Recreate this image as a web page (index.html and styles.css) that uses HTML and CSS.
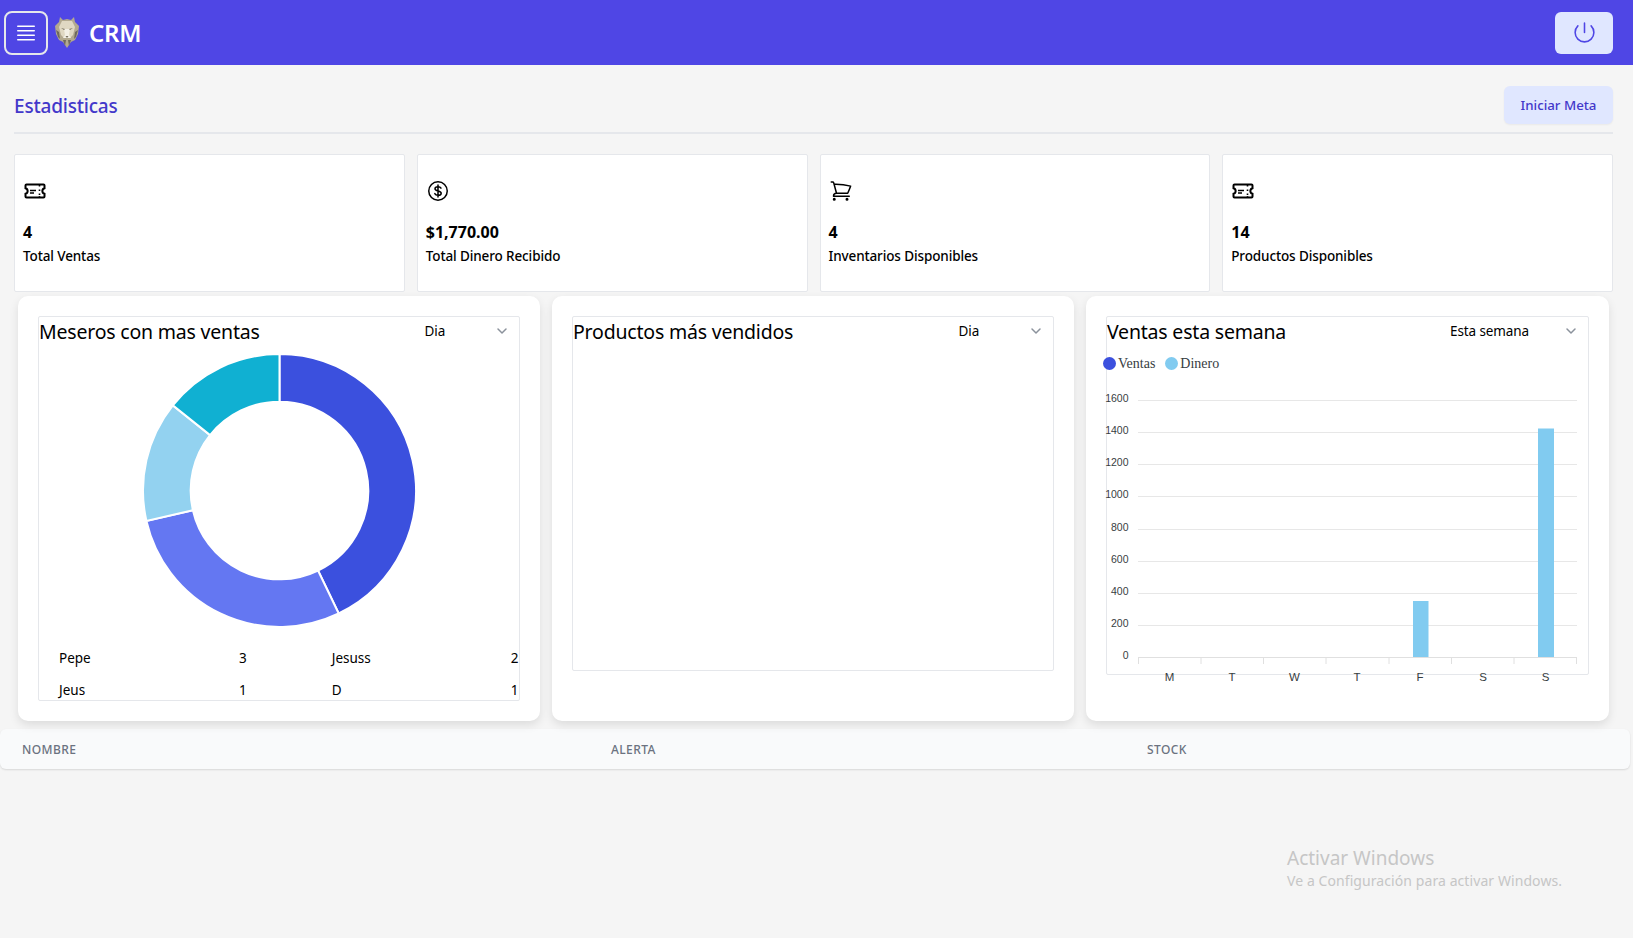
FILE: index.html
```html
<!DOCTYPE html>
<html lang="es">
<head>
<meta charset="utf-8">
<title>CRM</title>
<link rel="stylesheet" href="styles.css">
</head>
<body>
<svg class="defs" width="0" height="0" aria-hidden="true">
  <symbol id="ticket" viewBox="0 0 24 24">
    <path d="M3.500 5.500h17a1 1 0 0 1 1 1v2.700a2.900 2.900 0 0 0 0 5.600v2.700a1 1 0 0 1-1 1h-17a1 1 0 0 1-1-1v-2.700a2.900 2.900 0 0 0 0-5.600V6.500a1 1 0 0 1 1-1z" fill="none" stroke="currentColor" stroke-width="2"/>
    <path d="M7 11.500h6M7 14h4M16.500 6v1.500M16.500 10.500v1.500M16.500 14.500V16M16.500 17.200v1" fill="none" stroke="currentColor" stroke-width="1.600"/>
  </symbol>
  <symbol id="chev" viewBox="0 0 20 20">
    <path d="M6 8l4 4 4-4" fill="none" stroke="#8b929c" stroke-width="1.500" stroke-linecap="round" stroke-linejoin="round"/>
  </symbol>
</svg>

<header class="topbar">
  <div class="brand">
    <button class="menu-btn" type="button" aria-label="Menu">
      <svg class="menu-icon" viewBox="0 0 24 24"><path d="M3.750 5.250h16.500M3.750 9.750h16.500M3.750 14.250h16.500M3.750 18.750h16.500" fill="none" stroke="currentColor" stroke-width="1.500" stroke-linecap="round"/></svg>
    </button>
    <svg class="lion" viewBox="0 0 26 32" aria-hidden="true">
      <path d="M6 1l3 3 4-1 4 1 3-3 1 5 4 4-1 8-3 6-4 2-4 6-4-6-4-2-3-6-1-8 4-4z" fill="#b3a98f"/>
      <path d="M8 5h10l3 6-2 8-3 3h-6l-3-3-2-8z" fill="#e0d8c3"/>
      <path d="M2 14l3 2 1 7-2-2zM24 14l-3 2-1 7 2-2zM9 24l2 6 1-6zM17 24l-2 6-1-6z" fill="#6e695e"/>
      <path d="M10 13h6l-1 6 2 3h-8l2-3z" fill="#f3efe5"/>
      <path d="M7 12l4 1-1 1zM19 12l-4 1 1 1z" fill="#77705f"/>
      <path d="M11.500 20h3l-1.500 2z" fill="#77705f"/>
    </svg>
    <span class="brand-name">CRM</span>
  </div>
  <button class="power-btn" type="button" aria-label="Salir">
    <svg class="power-icon" viewBox="0 0 24 24"><path d="M5.636 5.636a9 9 0 1 0 12.728 0M12 3v9" fill="none" stroke="currentColor" stroke-width="1.500" stroke-linecap="round" stroke-linejoin="round"/></svg>
  </button>
</header>

<main class="page">
  <div class="title-row">
    <h1 class="page-title">Estadisticas</h1>
    <button class="goal-btn" type="button">Iniciar Meta</button>
  </div>

  <section class="stats">
    <article class="stat">
      <svg class="stat-icon"><use href="#ticket"/></svg>
      <div class="stat-value">4</div>
      <div class="stat-label">Total Ventas</div>
    </article>
    <article class="stat">
      <svg class="stat-icon" viewBox="0 0 24 24"><path d="M12 2.750a9.250 9.250 0 1 0 0 18.500 9.250 9.250 0 0 0 0-18.500zM12 6v12M15 9.200c-.5-1-1.600-1.500-3-1.500-1.700 0-3 .8-3 2.100 0 3 6.200 1.500 6.200 4.400 0 1.300-1.400 2.100-3.200 2.100-1.500 0-2.700-.6-3.200-1.700" fill="none" stroke="currentColor" stroke-width="1.500" stroke-linecap="round"/></svg>
      <div class="stat-value">$1,770.00</div>
      <div class="stat-label">Total Dinero Recibido</div>
    </article>
    <article class="stat">
      <svg class="stat-icon" viewBox="0 0 24 24"><path d="M2.250 3h1.386c.51 0 .955.343 1.087.835l.383 1.437M7.500 14.250a3 3 0 0 0-3 3h15.750m-12.750-3h11.218c1.121-2.300 2.100-4.684 2.924-7.138a60.114 60.114 0 0 0-16.536-1.840M7.500 14.250L5.106 5.272M6 20.250a.75.750 0 1 1-1.500 0 .75.750 0 0 1 1.500 0zm12.750 0a.75.750 0 1 1-1.500 0 .75.750 0 0 1 1.500 0z" fill="none" stroke="currentColor" stroke-width="1.500" stroke-linecap="round" stroke-linejoin="round"/></svg>
      <div class="stat-value">4</div>
      <div class="stat-label">Inventarios Disponibles</div>
    </article>
    <article class="stat">
      <svg class="stat-icon"><use href="#ticket"/></svg>
      <div class="stat-value">14</div>
      <div class="stat-label">Productos Disponibles</div>
    </article>
  </section>

  <section class="charts">
    <article class="panel">
      <div class="box box-donut">
        <div class="box-head">
          <h2 class="box-title">Meseros con mas ventas</h2>
          <div class="picker"><span>Dia</span><svg class="chev"><use href="#chev"/></svg></div>
        </div>
        <div class="donut-wrap">
          <svg class="donut" viewBox="-138 -138 276 276" aria-hidden="true">
            <g stroke="#fff" stroke-width="2">
              <path fill="#3b50de" d="M0-136A136 136 0 0 1 59 122.500L38.400 79.700A88.500 88.500 0 0 0 0-88.500z"/>
              <path fill="#6477f2" d="M59 122.500A136 136 0 0 1-132.600 30.300L-86.300 19.700A88.500 88.500 0 0 0 38.400 79.700z"/>
              <path fill="#93d2f0" d="M-132.600 30.300A136 136 0 0 1-106.300-84.800L-69.200-55.200A88.500 88.500 0 0 0-86.300 19.700z"/>
              <path fill="#10b0d2" d="M-106.300-84.800A136 136 0 0 1 0-136L0-88.500A88.500 88.500 0 0 0-69.200-55.200z"/>
            </g>
          </svg>
        </div>
        <div class="rank">
          <div class="rank-item"><span>Pepe</span><span>3</span></div>
          <div class="rank-item"><span>Jesuss</span><span>2</span></div>
          <div class="rank-item"><span>Jeus</span><span>1</span></div>
          <div class="rank-item"><span>D</span><span>1</span></div>
        </div>
      </div>
    </article>

    <article class="panel">
      <div class="box box-empty">
        <div class="box-head">
          <h2 class="box-title">Productos más vendidos</h2>
          <div class="picker"><span>Dia</span><svg class="chev"><use href="#chev"/></svg></div>
        </div>
      </div>
    </article>

    <article class="panel">
      <div class="box box-bars">
        <div class="box-head">
          <h2 class="box-title">Ventas esta semana</h2>
          <div class="picker picker-wide"><span>Esta semana</span><svg class="chev"><use href="#chev"/></svg></div>
        </div>
        <div class="legend">
          <span class="legend-item"><i class="dot dot-a"></i>Ventas</span>
          <span class="legend-item"><i class="dot dot-b"></i>Dinero</span>
        </div>
        <svg class="bars" viewBox="0 0 482 320" aria-hidden="true">
          <g class="grid">
            <path d="M32 24.500h439M32 56.500h439M32 88.500h439M32 120.500h439M32 153.500h439M32 185.500h439M32 217.500h439M32 249.500h439"/>
          </g>
          <g class="axis-x">
            <path d="M32 281.500h439M32.500 281v7M95 281v7M157.500 281v7M220 281v7M283 281v7M345.500 281v7M408 281v7M470.500 281v7"/>
          </g>
          <rect class="bar" x="307" y="225" width="15.500" height="56"/>
          <rect class="bar" x="432" y="52.500" width="16" height="228.500"/>
          <g class="y-labels">
            <text x="22.500" y="26">1600</text><text x="22.500" y="58">1400</text><text x="22.500" y="90">1200</text><text x="22.500" y="122">1000</text>
            <text x="22.500" y="155">800</text><text x="22.500" y="187">600</text><text x="22.500" y="219">400</text><text x="22.500" y="251">200</text><text x="22.500" y="283">0</text>
          </g>
          <g class="x-labels">
            <text x="63.500" y="305">M</text><text x="126" y="305">T</text><text x="188.500" y="305">W</text><text x="251" y="305">T</text>
            <text x="314" y="305">F</text><text x="377" y="305">S</text><text x="439.500" y="305">S</text>
          </g>
        </svg>
      </div>
    </article>
  </section>

  <section class="table-head">
    <span class="col col-name">Nombre</span>
    <span class="col col-alert">Alerta</span>
    <span class="col">Stock</span>
  </section>
</main>

<aside class="watermark">
  <div class="wm-title">Activar Windows</div>
  <div class="wm-sub">Ve a Configuración para activar Windows.</div>
</aside>
</body>
</html>
```
FILE: styles.css
```css
* { box-sizing: border-box; }
html, body { margin: 0; padding: 0; }
body {
  height: 938px;
  overflow: hidden;
  background: #f5f5f5;
  color: #000;
  font-family: "Noto Sans", "Open Sans", sans-serif;
  font-size: 14px;
}
button { font-family: inherit; cursor: pointer; }
h1, h2 { margin: 0; font-weight: 400; }
.defs { position: absolute; }

.topbar {
  height: 65px;
  background: #4f46e5;
  display: flex;
  align-items: center;
  justify-content: space-between;
  padding: 0 20px 0 4px;
}
.brand { display: flex; align-items: center; }
.menu-btn {
  width: 44px;
  height: 44px;
  padding: 0;
  display: flex;
  align-items: center;
  justify-content: center;
  background: transparent;
  border: 2px solid #e5e7eb;
  border-radius: 8px;
  color: #fff;
}
.menu-icon { width: 24px; height: 24px; }
.lion { width: 26px; height: 32px; margin-left: 6px; margin-bottom: 1px; }
.brand-name {
  margin-left: 9px;
  color: #fff;
  font-size: 24px;
  font-weight: 600;
  letter-spacing: -0.3px;
}
.power-btn {
  width: 58px;
  height: 42px;
  padding: 0;
  display: flex;
  align-items: center;
  justify-content: center;
  background: #e0e7ff;
  border: 0;
  border-radius: 6px;
  color: #4f46e5;
}
.power-icon { width: 25px; height: 25px; }

.page { padding: 0; }
.title-row {
  margin: 21px 20px 0 14px;
  height: 48px;
  padding-bottom: 8px;
  border-bottom: 2px solid #e5e7eb;
  display: flex;
  align-items: center;
  justify-content: space-between;
}
.page-title {
  padding-top: 2px;
  font-size: 19px;
  font-weight: 500;
  color: #4338ca;
  letter-spacing: -0.2px;
}
.goal-btn {
  width: 109px;
  height: 38px;
  padding: 0;
  background: #e0e7ff;
  border: 0;
  border-radius: 6px;
  color: #4338ca;
  font-size: 13.300px;
  font-weight: 500;
  box-shadow: 0 1px 2px rgba(0, 0, 0, .05);
}

.stats {
  margin: 20px 20px 0 14px;
  display: grid;
  grid-template-columns: repeat(4, 1fr);
  column-gap: 12px;
}
.stat {
  height: 138px;
  padding: 24px 8px 0 8px;
  background: #fff;
  border: 1px solid #e5e7eb;
  border-radius: 2px;
}
.stat-icon { display: block; width: 24px; height: 24px; color: #000; }
.stat-value {
  margin-top: 19px;
  font-size: 16px;
  font-weight: 700;
  line-height: 20px;
}
.stat-label {
  margin-top: 4px;
  font-size: 13.500px;
  font-weight: 500;
  line-height: 20px;
  letter-spacing: -0.12px;
}

.charts {
  margin: 4px 24px 0 18px;
  display: grid;
  grid-template-columns: repeat(3, 1fr);
  column-gap: 12.500px;
}
.panel {
  height: 425px;
  padding: 20px 20px 0;
  background: #fff;
  border-radius: 10px;
  box-shadow: 0 4px 10px rgba(0, 0, 0, .1);
}
.box {
  border: 1px solid #e5e7eb;
  border-radius: 2px;
  overflow: hidden;
}
.box-donut { height: 385px; }
.box-empty { height: 355px; }
.box-bars { height: 359px; overflow: visible; }
.box-head {
  height: 30px;
  padding-right: 7px;
  display: flex;
  align-items: center;
  justify-content: space-between;
}
.box-title { font-size: 19.500px; line-height: 30px; margin-top: -1px; letter-spacing: -0.2px; }
.picker {
  width: 87px;
  margin-top: -3px;
  display: flex;
  align-items: center;
  justify-content: space-between;
  font-size: 13.500px;
}
.picker-wide { width: 131px; letter-spacing: -0.1px; }
.chev { width: 20px; height: 20px; }

.donut-wrap { display: flex; justify-content: center; margin-top: 5px; padding-left: 1px; }
.donut { width: 277px; height: 277px; display: block; }
.rank {
  margin-top: 13px;
  display: grid;
  grid-template-columns: 1fr 1fr;
  grid-auto-rows: 32px;
}
.rank-item {
  display: flex;
  align-items: center;
  justify-content: space-between;
  font-size: 13.500px;
}
.rank-item:nth-child(odd) { padding: 0 32px 0 20px; }
.rank-item:nth-child(even) { padding: 0 0 0 53px; }

.legend {
  margin: 4px 0 0 -4px;
  display: flex;
  gap: 10px;
  font-family: "Liberation Serif", serif;
  font-size: 14px;
  line-height: 26px;
  color: #373d3f;
}
.legend-item { display: flex; align-items: center; }
.dot { width: 13px; height: 13px; border-radius: 50%; margin-right: 2px; margin-top: -2px; }
.dot-a { background: #3b50de; }
.dot-b { background: #81cbf0; }
.bars {
  display: block;
  width: 482px;
  height: 320px;
  overflow: visible;
  margin: -1px 0 0 -1px;
  font-family: "Liberation Sans", sans-serif;
  font-size: 10.500px;
  fill: #373d3f;
}
.grid path { stroke: #e7e7e7; stroke-width: 1; fill: none; }
.axis-x path { stroke: #e0e0e0; stroke-width: 1; fill: none; }
.bar { fill: #81cbf0; }
.y-labels text { text-anchor: end; }
.x-labels text { text-anchor: middle; font-size: 11.500px; }

.table-head {
  margin: 8px 3px 0 0;
  height: 40px;
  background: #f9fafb;
  border-radius: 6px;
  box-shadow: 0 1px 2px rgba(0, 0, 0, .12);
  display: flex;
  align-items: center;
  padding-left: 22px;
}
.col {
  font-size: 12px;
  font-weight: 500;
  letter-spacing: .4px;
  text-transform: uppercase;
  color: #6b7280;
}
.col-name { width: 589px; }
.col-alert { width: 536px; }

.watermark {
  position: absolute;
  left: 1287px;
  top: 845px;
  color: #c6c6c6;
}
.wm-title { font-size: 19px; line-height: 26px; }
.wm-sub { font-size: 14px; line-height: 19px; letter-spacing: .08px; }
```
